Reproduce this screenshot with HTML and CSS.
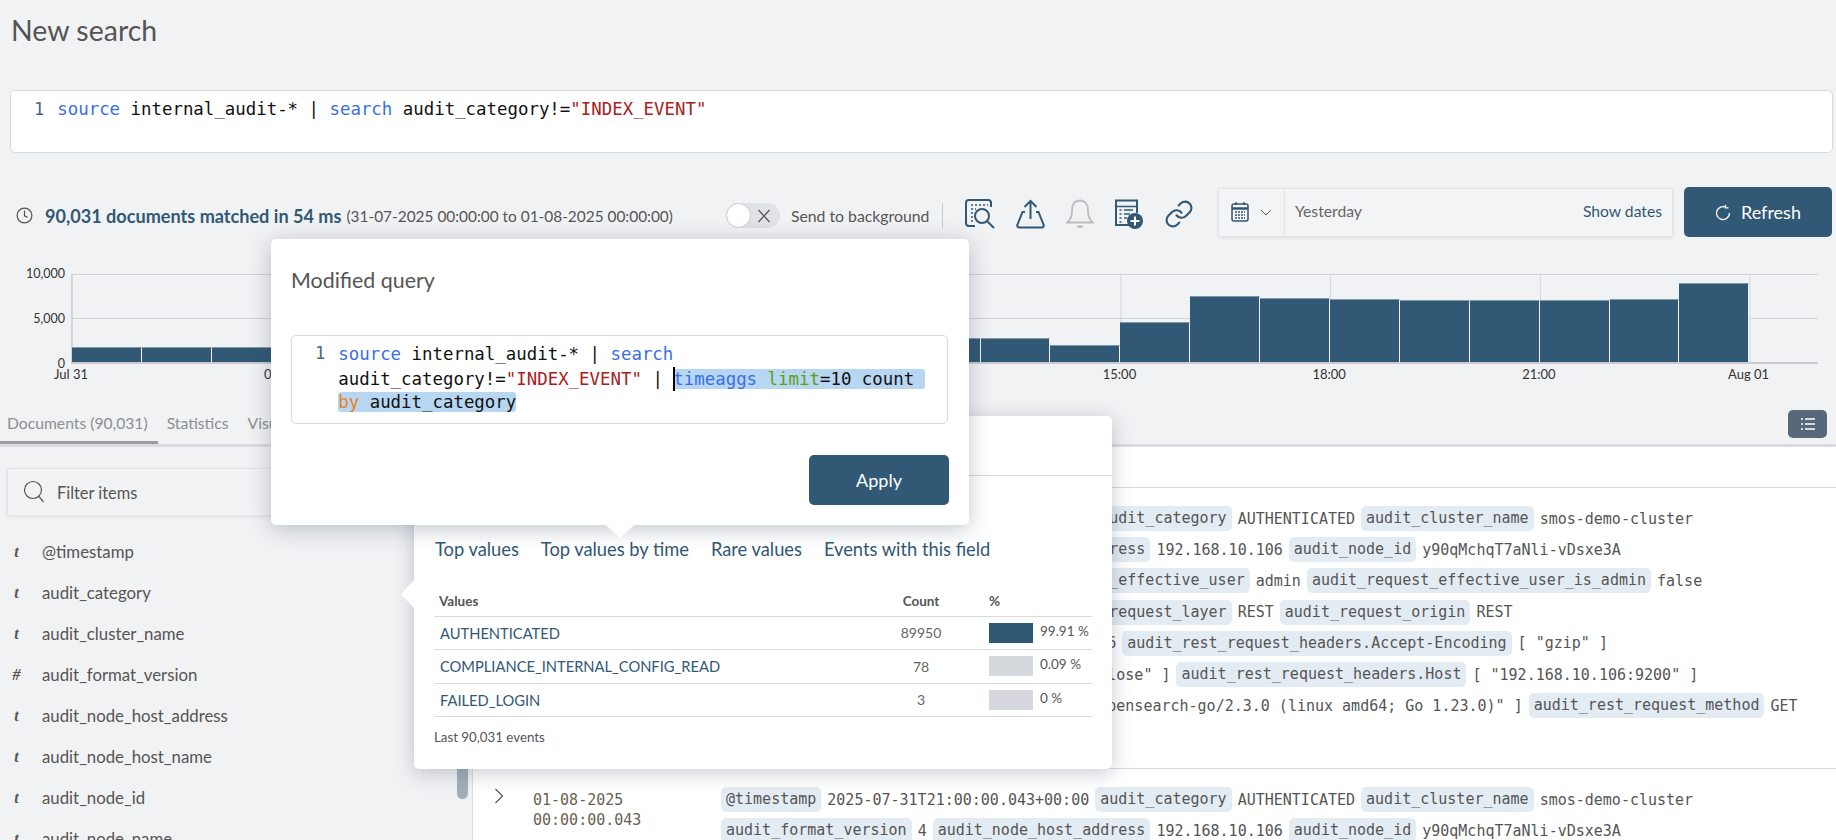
FILE: index.html
```html
<!DOCTYPE html>
<html lang="en">

<head>
    <meta charset="UTF-8">
    <title>New search</title>
    <link rel="stylesheet" href="styles.css">
</head>

<body>
    <h1 class="page-title">New search</h1>

    <div class="query-box">
        <span class="line-no">1</span>
        <code class="code"><span class="kw">source</span> internal_audit-* | <span class="kw">search</span> audit_category!=<span class="str">"INDEX_EVENT"</span></code>
    </div>

    <div class="stats-row">
        <div class="stats-left">
            <svg class="clock-icon" width="17" height="17" viewBox="0 0 17 17" fill="none" stroke="#555" stroke-width="1.2">
                <circle cx="8.5" cy="8.5" r="7.4" />
                <path d="M8.5 3.6v5.2l3 1.6" />
            </svg>
            <span class="stats-strong">90,031 documents matched in 54 ms</span>
            <span class="stats-range">(31-07-2025 00:00:00 to 01-08-2025 00:00:00)</span>
            <div class="toggle">
                <span class="toggle-knob"></span>
                <svg width="14" height="14" viewBox="0 0 14 14" stroke="#555" stroke-width="1.2">
                    <path d="M1.5 1 12.5 13M12.5 1 1.5 13" />
                </svg>
            </div>
            <span class="toggle-label">Send to background</span>
            <span class="stats-divider"></span>
        </div>

        <div class="action-icons">
            <svg width="30" height="30" viewBox="0 0 30 30" fill="none" stroke="#315874" stroke-width="2">
                <path d="M26 8V4a3 3 0 0 0-3-3H4a3 3 0 0 0-3 3v20a3 3 0 0 0 3 3h6" />
                <path d="M6 6h17M6 10h5M6 14h2M6 18h2M6 22h2" stroke-dasharray="2 2" stroke-width="1.6" />
                <circle cx="17" cy="17" r="7" />
                <path d="M22 22l7 7" />
            </svg>
            <svg width="29" height="30" viewBox="0 0 29 30" fill="none" stroke="#315874" stroke-width="2">
                <path d="M9 13H6.500L1.500 25.500a2 2 0 0 0 2 3h22a2 2 0 0 0 2-3L22.500 13H20" />
                <path d="M14.500 20V2M8.500 8l6-6 6 6" />
            </svg>
            <svg width="28" height="30" viewBox="0 0 28 30" fill="none" stroke="#bbbdc0" stroke-width="1.800">
                <path d="M14 1.500c-6 0-8 5-8 10 0 7-2 10-5 12h26c-3-2-5-5-5-12 0-5-2-10-8-10z" />
                <path d="M10.500 26.500h7l-1.500 2.500h-4z" fill="#bbbdc0" stroke="none" />
            </svg>
            <svg width="28" height="30" viewBox="0 0 28 30" fill="none" stroke="#315874">
                <path d="M18 26H1V1.500h21V14" stroke-width="2" />
                <path d="M1 7.500h21" stroke-width="1.500" />
                <path d="M4.500 11h2M9 11h9M4.500 15h2M9 15h6M4.500 19h2M9 19h3M4.500 23h2" stroke-width="1.500" />
                <circle cx="20" cy="22" r="8" fill="#315874" stroke="none" />
                <path d="M20 17.500v9M15.500 22h9" stroke="#fff" stroke-width="2" />
            </svg>
            <svg width="30" height="30" viewBox="0 0 24 24" fill="none" stroke="#315874" stroke-width="1.700" stroke-linecap="round">
                <path d="M10 13a5 5 0 0 0 7.540.540l3-3a5 5 0 0 0-7.070-7.070l-1.720 1.710" />
                <path d="M14 11a5 5 0 0 0-7.540-.540l-3 3a5 5 0 0 0 7.070 7.070l1.710-1.710" />
            </svg>
        </div>

        <div class="date-picker">
            <div class="date-icon-cell">
                <svg width="18" height="22" viewBox="0 0 18 22" fill="none" stroke="#315874">
                    <rect x="1" y="3" width="16" height="17" rx="2" stroke-width="1.500" />
                    <path d="M1 7.500h16" stroke-width="2.500" />
                    <path d="M5 1v3M13 1v3" stroke-width="1.500" />
                    <path d="M4 11h10M4 14h10M4 17h10" stroke-width="1.400" stroke-dasharray="2 1" />
                </svg>
                <svg width="12" height="7" viewBox="0 0 12 7" fill="none" stroke="#555" stroke-width="1">
                    <path d="M1 1l5 5 5-5" />
                </svg>
            </div>
            <span class="date-label">Yesterday</span>
            <a class="show-dates">Show dates</a>
        </div>

        <button class="refresh-button">
            <svg width="16" height="17" viewBox="0 0 16 17" fill="none" stroke="#fff" stroke-width="1.300">
                <path d="M11 3.300a6.500 6.500 0 1 0 3.500 5.700" />
                <path d="M10.500.8v3h3" />
            </svg>
            Refresh
        </button>
    </div>

    <div class="chart">
        <div class="chart-body">
            <div class="y-axis">
                <span>10,000</span>
                <span>5,000</span>
                <span>0</span>
            </div>
            <div class="plot">
                <div class="bar" style="height:15px"></div>
                <div class="bar" style="height:15px"></div>
                <div class="bar" style="height:15px"></div>
                <div class="bar" style="height:15px"></div>
                <div class="bar" style="height:15px"></div>
                <div class="bar" style="height:15px"></div>
                <div class="bar" style="height:16px"></div>
                <div class="bar" style="height:17px"></div>
                <div class="bar" style="height:18px"></div>
                <div class="bar" style="height:20px"></div>
                <div class="bar" style="height:22px"></div>
                <div class="bar" style="height:24px"></div>
                <div class="bar" style="height:24px"></div>
                <div class="bar" style="height:24px"></div>
                <div class="bar" style="height:17px"></div>
                <div class="bar" style="height:40px"></div>
                <div class="bar" style="height:66px"></div>
                <div class="bar" style="height:64px"></div>
                <div class="bar" style="height:63px"></div>
                <div class="bar" style="height:62px"></div>
                <div class="bar" style="height:62px"></div>
                <div class="bar" style="height:62px"></div>
                <div class="bar" style="height:63px"></div>
                <div class="bar" style="height:79px"></div>
            </div>
        </div>
        <div class="x-axis">
            <span>Jul 31</span>
            <span>03:00</span>
            <span>06:00</span>
            <span>09:00</span>
            <span>12:00</span>
            <span>15:00</span>
            <span>18:00</span>
            <span>21:00</span>
            <span>Aug 01</span>
        </div>
    </div>

    <div class="tabs-bar">
        <a class="tab tab-active">Documents (90,031)</a>
        <a class="tab">Statistics</a>
        <a class="tab">Visualizations</a>
        <button class="list-button">
            <svg width="16" height="14" viewBox="0 0 16 14" stroke="#fff" stroke-width="1.500">
                <path d="M1 2h2M5 2h10M1 7h2M5 7h10M1 12h2M5 12h10" />
            </svg>
        </button>
    </div>

    <div class="main">
        <aside class="sidebar">
            <div class="filter-box">
                <svg width="22" height="24" viewBox="0 0 22 24" fill="none" stroke="#555" stroke-width="1.200">
                    <circle cx="10" cy="10" r="8.500" />
                    <path d="M16 16.500l4.500 5.500" />
                </svg>
                <span>Filter items</span>
            </div>
            <ul class="field-list">
                <li><i>t</i>@timestamp</li>
                <li><i>t</i>audit_category</li>
                <li><i>t</i>audit_cluster_name</li>
                <li><i>#</i>audit_format_version</li>
                <li><i>t</i>audit_node_host_address</li>
                <li><i>t</i>audit_node_host_name</li>
                <li><i>t</i>audit_node_id</li>
                <li><i>t</i>audit_node_name</li>
            </ul>
            <div class="scroll-thumb"></div>
        </aside>

        <section class="docs">
            <div class="docs-header"></div>

            <div class="doc doc-first">
                <svg class="doc-chevron" width="10" height="16" viewBox="0 0 10 16" fill="none" stroke="#555" stroke-width="1.200">
                    <path d="M1.500 1l7 7-7 7" />
                </svg>
                <div class="doc-date">01-08-2025<br>00:00:00.043</div>
                <div class="doc-body">
                    <div class="doc-line"><b>@timestamp</b><span>2025-07-31T21:00:00.043+00:00</span><b>audit_category</b><span>AUTHENTICATED</span><b>audit_cluster_name</b><span>smos-demo-cluster</span></div>
                    <div class="doc-line"><b>audit_format_version</b><span>4</span><b>audit_node_host_address</b><span>192.168.10.106</span><b>audit_node_id</b><span>y90qMchqT7aNli-vDsxe3A</span></div>
                    <div class="doc-line"><b>audit_node_name</b><span>smos-demo-01</span><b>audit_request_effective_user</b><span>admin</span><b>audit_request_effective_user_is_admin</b><span>false</span></div>
                    <div class="doc-line"><b>audit_request_initiating_user</b><span>admin</span><b>audit_request_layer</b><span>REST</span><b>audit_request_origin</b><span>REST</span></div>
                    <div class="doc-line"><b>audit_request_remote_address</b><span>192.168.10.106</span><b>audit_rest_request_headers.Accept-Encoding</b><span>[ "gzip" ]</span></div>
                    <div class="doc-line"><b>audit_rest_request_headers.Connection</b><span>[ "close" ]</span><b>audit_rest_request_headers.Host</b><span>[ "192.168.10.106:9200" ]</span></div>
                    <div class="doc-line"><b>audit_rest_request_headers.User-Agent</b><span>[ "opensearch-go/2.3.0 (linux amd64; Go 1.23.0)" ]</span><b>audit_rest_request_method</b><span>GET</span></div>
                </div>
            </div>

            <div class="doc">
                <svg class="doc-chevron" width="10" height="16" viewBox="0 0 10 16" fill="none" stroke="#555" stroke-width="1.200">
                    <path d="M1.500 1l7 7-7 7" />
                </svg>
                <div class="doc-date">01-08-2025<br>00:00:00.043</div>
                <div class="doc-body">
                    <div class="doc-line"><b>@timestamp</b><span>2025-07-31T21:00:00.043+00:00</span><b>audit_category</b><span>AUTHENTICATED</span><b>audit_cluster_name</b><span>smos-demo-cluster</span></div>
                    <div class="doc-line"><b>audit_format_version</b><span>4</span><b>audit_node_host_address</b><span>192.168.10.106</span><b>audit_node_id</b><span>y90qMchqT7aNli-vDsxe3A</span></div>
                </div>
            </div>
        </section>
    </div>

    <!-- Field popover -->
    <div class="field-popover">
        <div class="popover-head"></div>
        <div class="popover-links">
            <a>Top values</a>
            <a>Top values by time</a>
            <a>Rare values</a>
            <a>Events with this field</a>
        </div>
        <table class="values-table">
            <tr>
                <th>Values</th>
                <th class="col-count">Count</th>
                <th class="col-pct">%</th>
            </tr>
            <tr>
                <td class="value-name">AUTHENTICATED</td>
                <td class="col-count">89950</td>
                <td class="col-pct"><span class="pct-bar pct-full"></span>99.91 %</td>
            </tr>
            <tr>
                <td class="value-name">COMPLIANCE_INTERNAL_CONFIG_READ</td>
                <td class="col-count">78</td>
                <td class="col-pct"><span class="pct-bar"></span>0.09 %</td>
            </tr>
            <tr>
                <td class="value-name">FAILED_LOGIN</td>
                <td class="col-count">3</td>
                <td class="col-pct"><span class="pct-bar"></span>0 %</td>
            </tr>
        </table>
        <p class="popover-foot">Last 90,031 events</p>
    </div>

    <!-- Modified query dialog -->
    <div class="query-modal">
        <h2 class="modal-title">Modified query</h2>
        <div class="modal-editor">
            <span class="line-no">1</span>
            <code class="code modal-code"><span class="kw">source</span> internal_audit-* | <span class="kw">search</span>
audit_category!=<span class="str">"INDEX_EVENT"</span> | <span class="caret"></span><span class="sel"><span class="kw">timeaggs</span> <span class="opt">limit</span>=10 count </span>
<span class="sel"><span class="by">by</span> audit_category</span></code>
        </div>
        <div class="modal-actions">
            <button class="apply-button">Apply</button>
        </div>
    </div>
</body>
</html>
```

FILE: styles.css
```css
* {
    margin: 0;
    padding: 0;
    box-sizing: border-box;
}

body {
    position: relative;
    width: 1836px;
    height: 840px;
    overflow: hidden;
    background-color: #f1f2f4;
    font-family: 'Lato', sans-serif;
    color: #555;
}

button {
    border: none;
    font-family: inherit;
}

.page-title {
    height: 46px;
    padding: 13px 0 0 11px;
    font-size: 28.5px;
    line-height: 34px;
    font-weight: 400;
    color: #555;
}

.code {
    font-family: 'DejaVu Sans Mono', monospace;
    font-size: 17.4px;
    color: #111;
    white-space: pre;
}

.kw {
    color: #3a6ee8;
}

.str {
    color: #a82020;
}

.opt {
    color: #5f9e10;
}

.by {
    color: #e8801f;
}

.line-no {
    font-family: 'DejaVu Sans Mono', monospace;
    font-size: 17px;
    color: #4a6a80;
}

.query-box {
    display: flex;
    gap: 13px;
    height: 63px;
    margin: 44px 3px 0 10px;
    padding: 8px 0 0 23px;
    background: #fff;
    border: 1px solid #d8dbdf;
    border-radius: 5px;
}

/* Stats row */
.stats-row {
    display: flex;
    align-items: center;
    height: 50px;
    margin-top: 34px;
}

.stats-left {
    display: flex;
    align-items: center;
    width: 944px;
    padding: 7px 0 0 16px;
}

.clock-icon {
    flex: none;
}

.stats-strong {
    margin-left: 12px;
    font-size: 18.1px;
    font-weight: 700;
    color: #315874;
    white-space: nowrap;
}

.stats-range {
    margin-left: 5px;
    font-size: 15.4px;
    white-space: nowrap;
}

.toggle {
    position: relative;
    display: flex;
    align-items: center;
    justify-content: flex-end;
    flex: none;
    width: 54px;
    height: 25px;
    margin-left: 53px;
    padding-right: 9px;
    background: #dfe2e6;
    border-radius: 13px;
}

.toggle-knob {
    position: absolute;
    left: 0;
    top: 0;
    width: 25px;
    height: 25px;
    background: #fff;
    border: 1px solid #c9ccd0;
    border-radius: 50%;
}

.toggle-label {
    margin-left: 11px;
    font-size: 15.8px;
    white-space: nowrap;
}

.stats-divider {
    width: 1px;
    height: 25px;
    margin-left: 13px;
    background: #c8cbcf;
}

.action-icons {
    display: flex;
    align-items: center;
    gap: 21px;
    padding: 4px 0 0 21px;
    width: 274px;
}

.date-picker {
    display: flex;
    align-items: center;
    width: 455px;
    height: 49px;
    background: #f3f4f6;
    border: 1px solid #e2e4e7;
    box-shadow: 0 1px 3px rgba(0, 0, 0, 0.08);
}

.date-icon-cell {
    display: flex;
    align-items: center;
    gap: 11px;
    width: 66px;
    height: 100%;
    padding-left: 12px;
    border-right: 1px solid #e2e4e7;
}

.date-label {
    margin-left: 10px;
    padding-bottom: 2px;
    font-size: 15.7px;
    color: #666;
}

.show-dates {
    margin-left: auto;
    margin-right: 10px;
    padding-bottom: 2px;
    font-size: 15.7px;
    color: #315874;
}

.refresh-button {
    display: flex;
    align-items: center;
    justify-content: center;
    gap: 10px;
    width: 148px;
    height: 50px;
    margin-left: 11px;
    background: #315874;
    border-radius: 5px;
    color: #fff;
    font-size: 18px;
}

/* Histogram */
.chart {
    margin-top: 37px;
    font-size: 13px;
    color: #333;
}

.chart-body {
    display: flex;
}

.y-axis {
    display: flex;
    flex-direction: column;
    justify-content: space-between;
    width: 65px;
    height: 104px;
    margin: -7px 6px 0 0;
    text-align: right;
    font-size: 12.5px;
    line-height: 14px;
}

.plot {
    display: flex;
    align-items: flex-end;
    width: 1747px;
    height: 90px;
    border-left: 1px solid #cfd2d6;
    border-bottom: 2px solid #c9ccd1;
    background-image:
        linear-gradient(#cfd2d6 1px, transparent 1px),
        linear-gradient(#cfd2d6 1px, transparent 1px),
        linear-gradient(90deg, #d4d6da 1px, transparent 1px);
    background-size: 100% 1px, 100% 1px, 209.7px 100%;
    background-position: 0 0, 0 44px, 0 0;
    background-repeat: no-repeat, no-repeat, repeat-x;
}

.bar {
    flex: none;
    width: 69.9px;
    background: #315874;
    border-top: 1px solid #8299aa;
    border-right: 1px solid #f1f2f4;
}

.x-axis {
    display: flex;
    margin: -5px 0 0 -33.8px;
    line-height: 16px;
}

.x-axis span {
    flex: none;
    width: 209.7px;
    text-align: center;
}

/* Tabs */
.tabs-bar {
    position: relative;
    display: flex;
    align-items: center;
    height: 49px;
    margin-top: 16px;
    padding: 3px 0 0 7px;
    gap: 19px;
    border-bottom: 3px solid #d9dce0;
    font-size: 15.7px;
    color: #8b8e92;
}

.tab-active {
    position: relative;
}

.tab-active::after {
    content: "";
    position: absolute;
    left: -7px;
    right: -10px;
    bottom: -12px;
    height: 3px;
    background: #9a9c9f;
}

.list-button {
    position: absolute;
    right: 9px;
    top: 12px;
    display: flex;
    align-items: center;
    justify-content: center;
    width: 39px;
    height: 28px;
    background: #56687a;
    border-radius: 5px;
}

/* Main area */
.main {
    display: flex;
    height: 400px;
}

.sidebar {
    position: relative;
    flex: none;
    width: 473px;
    padding: 21px 0 0 7px;
    border-right: 1px solid #d8dbdf;
    overflow: hidden;
}

.filter-box {
    display: flex;
    align-items: center;
    gap: 12px;
    width: 451px;
    height: 48px;
    padding-left: 15px;
    border: 1px solid #e2e4e7;
    box-shadow: 0 1px 3px rgba(0, 0, 0, 0.08);
    font-size: 16.4px;
}

.field-list {
    margin: 15px 0 0 -7px;
    list-style: none;
    font-size: 16.8px;
}

.field-list li {
    display: flex;
    align-items: center;
    height: 41px;
    padding-left: 42px;
    position: relative;
}

.field-list i {
    position: absolute;
    left: 11px;
    width: 11px;
    text-align: center;
    font-family: 'Liberation Serif', serif;
    font-size: 16px;
    font-weight: 700;
}

.scroll-thumb {
    position: absolute;
    left: 457px;
    top: 180px;
    width: 11px;
    height: 172px;
    background: #a3aeb8;
    border-radius: 6px;
}

.docs {
    flex: 1;
    background: #fff;
    font-family: 'DejaVu Sans Mono', monospace;
    font-size: 15px;
}

.docs-header {
    height: 41px;
    border-bottom: 1px solid #d8dbdf;
}

.doc {
    display: flex;
    padding: 15px 0 0 21px;
}

.doc-first {
    height: 281px;
    border-bottom: 1px solid #d8dbdf;
}

.doc-chevron {
    flex: none;
    margin-top: 4px;
}

.doc-date {
    flex: none;
    width: 188px;
    margin: 6px 0 0 29px;
    line-height: 20px;
    color: #6b5f4f;
}

.doc-line {
    display: flex;
    align-items: center;
    gap: 6px;
    height: 31.2px;
    white-space: pre;
}

.doc-line b {
    height: 25px;
    padding: 0 5px;
    font-weight: 400;
    line-height: 24px;
    background: #e3ecf3;
    border-radius: 5px;
}

/* Popover */
.field-popover {
    position: absolute;
    left: 414px;
    top: 416px;
    width: 698px;
    height: 353px;
    padding: 0 20px;
    background: #fff;
    border-radius: 5px;
    box-shadow: 0 4px 20px rgba(50, 70, 90, 0.28);
}

.field-popover::before {
    content: "";
    position: absolute;
    left: -13px;
    top: 164px;
    width: 13px;
    height: 28px;
    background: #fff;
    clip-path: polygon(100% 0, 0 50%, 100% 100%);
}

.popover-head {
    height: 60px;
    margin: 0 -20px;
    border-bottom: 1px solid #d8dbdf;
}

.popover-links {
    display: flex;
    gap: 22px;
    margin-top: 60px;
    padding-left: 1px;
    font-size: 18.3px;
    line-height: 26px;
    color: #315874;
}

.values-table {
    width: 658px;
    margin-top: 26px;
    border-collapse: collapse;
    font-size: 14.7px;
    table-layout: fixed;
}

.values-table th {
    height: 28px;
    padding: 0 0 2px 5px;
    text-align: left;
    font-size: 13.5px;
    border-bottom: 1px solid #d8dbdf;
}

.values-table td {
    height: 33.5px;
    border-bottom: 1px solid #d8dbdf;
}

.value-name {
    padding-left: 6px;
    color: #315874;
}

.values-table .col-count {
    width: 136px;
    padding: 0;
    text-align: center;
    font-size: 14px;
    color: #666;
}

.values-table th.col-count {
    padding-bottom: 2px;
    font-size: 13.5px;
    color: #555;
}

.values-table .col-pct {
    width: 103px;
    padding-left: 0;
    white-space: nowrap;
    font-size: 13.5px;
}

.values-table th.col-pct {
    padding-bottom: 2px;
}

.pct-bar {
    display: inline-block;
    width: 44px;
    height: 20px;
    margin-right: 7px;
    background: #d5d8dc;
    vertical-align: middle;
}

.pct-full {
    background: #315874;
}

.popover-foot {
    margin-top: 12px;
    font-size: 13.3px;
    color: #555;
}

/* Modal */
.query-modal {
    position: absolute;
    left: 271px;
    top: 239px;
    width: 698px;
    height: 286px;
    padding: 0 20px;
    background: #fff;
    border-radius: 5px;
    box-shadow: 0 4px 22px rgba(50, 70, 90, 0.3);
}

.query-modal::after {
    content: "";
    position: absolute;
    left: 335px;
    top: 286px;
    width: 28px;
    height: 13px;
    background: #fff;
    clip-path: polygon(0 0, 100% 0, 50% 100%);
}

.modal-title {
    height: 96px;
    padding-top: 27px;
    font-size: 21.4px;
    line-height: 28px;
    font-weight: 400;
    color: #555;
}

.modal-editor {
    display: flex;
    gap: 13px;
    width: 657px;
    height: 89px;
    padding: 7px 0 0 23px;
    border: 1px solid #d8dbdf;
    border-radius: 5px;
}

.modal-code {
    display: block;
    line-height: 23.5px;
}

.sel {
    background: #b6d6f2;
    border-radius: 3px;
}

.caret {
    position: relative;
    z-index: 1;
    display: inline-block;
    width: 2px;
    height: 24px;
    margin-right: -2px;
    background: #000;
    vertical-align: -6px;
}

.modal-actions {
    display: flex;
    justify-content: flex-end;
    margin-top: 31px;
}

.apply-button {
    width: 140px;
    height: 50px;
    background: #315874;
    border-radius: 5px;
    color: #fff;
    font-size: 18px;
}
```
